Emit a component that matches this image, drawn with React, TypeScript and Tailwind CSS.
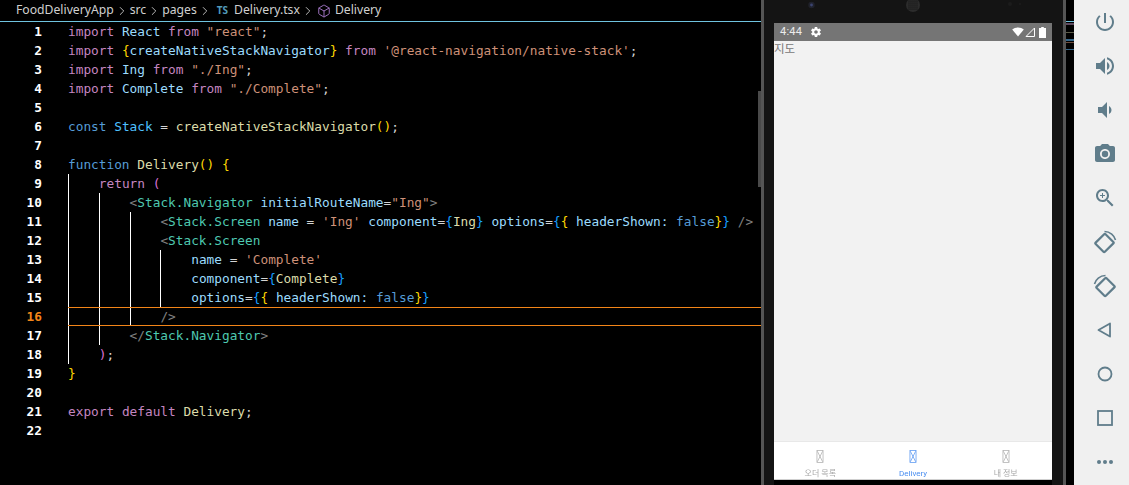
import { Box, ChevronRight } from 'lucide-react'
import type { ReactNode } from 'react'

// token colours from the editor theme
const KW = 'text-[#c586c0]'
const BL = 'text-[#569cd6]'
const VAR = 'text-[#9cdcfe]'
const CONST = 'text-[#4fc1ff]'
const FN = 'text-[#dcdcaa]'
const STR = 'text-[#ce9178]'
const TXT = 'text-[#d4d4d4]'
const TAG = 'text-[#808080]'
const COMP = 'text-[#4ec9b0]'
const Y = 'text-[#ffd700]'
const P = 'text-[#da70d6]'
const B = 'text-[#179fff]'

type Tok = [string, string]
type Line = { indent: number; toks: Tok[] }

const LINES: Line[] = [
  { indent: 0, toks: [['import', KW], [' ', TXT], ['React', VAR], [' ', TXT], ['from', KW], [' ', TXT], ['"react"', STR], [';', TXT]] },
  { indent: 0, toks: [['import', KW], [' ', TXT], ['{', Y], ['createNativeStackNavigator', VAR], ['}', Y], [' ', TXT], ['from', KW], [' ', TXT], ["'@react-navigation/native-stack'", STR], [';', TXT]] },
  { indent: 0, toks: [['import', KW], [' ', TXT], ['Ing', VAR], [' ', TXT], ['from', KW], [' ', TXT], ['"./Ing"', STR], [';', TXT]] },
  { indent: 0, toks: [['import', KW], [' ', TXT], ['Complete', VAR], [' ', TXT], ['from', KW], [' ', TXT], ['"./Complete"', STR], [';', TXT]] },
  { indent: 0, toks: [] },
  { indent: 0, toks: [['const', BL], [' ', TXT], ['Stack', CONST], [' = ', TXT], ['createNativeStackNavigator', FN], ['()', Y], [';', TXT]] },
  { indent: 0, toks: [] },
  { indent: 0, toks: [['function', BL], [' ', TXT], ['Delivery', FN], ['()', Y], [' ', TXT], ['{', Y]] },
  { indent: 1, toks: [['return', KW], [' ', TXT], ['(', P]] },
  { indent: 2, toks: [['<', TAG], ['Stack.Navigator', COMP], [' ', TXT], ['initialRouteName', VAR], ['=', TXT], ['"Ing"', STR], ['>', TAG]] },
  { indent: 3, toks: [['<', TAG], ['Stack.Screen', COMP], [' ', TXT], ['name', VAR], [' = ', TXT], ["'Ing'", STR], [' ', TXT], ['component', VAR], ['=', TXT], ['{', B], ['Ing', FN], ['}', B], [' ', TXT], ['options', VAR], ['=', TXT], ['{', B], ['{', Y], [' ', TXT], ['headerShown', VAR], [': ', VAR], ['false', BL], ['}', Y], ['}', B], [' ', TXT], ['/>', TAG]] },
  { indent: 3, toks: [['<', TAG], ['Stack.Screen', COMP]] },
  { indent: 4, toks: [['name', VAR], [' = ', TXT], ["'Complete'", STR]] },
  { indent: 4, toks: [['component', VAR], ['=', TXT], ['{', B], ['Complete', FN], ['}', B]] },
  { indent: 4, toks: [['options', VAR], ['=', TXT], ['{', B], ['{', Y], [' ', TXT], ['headerShown', VAR], [': ', VAR], ['false', BL], ['}', Y], ['}', B]] },
  { indent: 3, toks: [['/>', TAG]] },
  { indent: 2, toks: [['</', TAG], ['Stack.Navigator', COMP], ['>', TAG]] },
  { indent: 1, toks: [[')', P], [';', TXT]] },
  { indent: 0, toks: [['}', Y]] },
  { indent: 0, toks: [] },
  { indent: 0, toks: [['export', KW], [' ', TXT], ['default', KW], [' ', TXT], ['Delivery', FN], [';', TXT]] },
  { indent: 0, toks: [] },
]

function Crumb({ children }: { children: ReactNode }) {
  return (
    <>
      {children}
      <ChevronRight className="w-[14px] h-[14px] mx-[1px] text-[#d0d0d0]" strokeWidth={1.5} />
    </>
  )
}

function Breadcrumb() {
  return (
    <div className="h-[22px] flex items-center pl-[16px] border-b border-[#6fc3df] text-[12.2px] text-[#d0d0d0] font-['Noto_Sans',sans-serif] whitespace-nowrap">
      <Crumb>FoodDeliveryApp</Crumb>
      <Crumb>src</Crumb>
      <Crumb>pages</Crumb>
      <Crumb>
        <span className="text-[10px] font-bold text-[#519aba] mr-[6px] ml-[4px]">TS</span>
        Delivery.tsx
      </Crumb>
      <Box className="w-[14px] h-[14px] ml-[1px] mr-[4px] text-[#b180d7]" strokeWidth={1.5} />
      <span>Delivery</span>
    </div>
  )
}

function CodeRow({ line, n }: { line: Line; n: number }) {
  const active = n === 16
  return (
    <div className="flex h-[19px]">
      <div className={`w-[42px] shrink-0 text-right font-bold ${active ? 'text-[#f38518]' : 'text-white'}`}>{n}</div>
      <div className={`ml-[26px] flex-1 flex items-center ${active ? 'border-y border-[#f38518]' : ''}`}>
        {Array.from({ length: line.indent }).map((_, i) => (
          <span key={i} className="w-[30.8px] shrink-0 self-stretch border-l border-white" />
        ))}
        <span className="whitespace-pre">
          {line.toks.map(([t, c], i) => (
            <span key={i} className={c}>{t}</span>
          ))}
        </span>
      </div>
    </div>
  )
}

function Editor() {
  return (
    <div className="w-[761px] shrink-0 bg-black overflow-hidden">
      <Breadcrumb />
      <div className="font-['DejaVu_Sans_Mono',monospace] text-[12.79px] leading-[19px]">
        {LINES.map((line, i) => (
          <CodeRow key={i} line={line} n={i + 1} />
        ))}
      </div>
    </div>
  )
}

function TopBezel() {
  return (
    <svg className="w-full h-[23px] block shrink-0" viewBox="0 0 299 23">
      <circle cx="47.5" cy="5" r="3.2" fill="#20222c" />
      <circle cx="47.5" cy="5" r="1.4" fill="#3b4470" />
      <circle cx="149" cy="5" r="7" fill="#2c2c2c" />
      {[-4, -2, 0, 2, 4].map((dx) =>
        [-4, -2, 0, 2, 4].map((dy) => (
          <circle key={`${dx}${dy}`} cx={149 + dx} cy={5 + dy} r="0.6" fill="#0c0c0c" />
        )),
      )}
      <circle cx="246" cy="4" r="2" fill="#1c1c1c" />
      <circle cx="256" cy="4" r="1" fill="#1c1c1c" />
    </svg>
  )
}

function StatusBar() {
  return (
    <div className="h-[18px] shrink-0 bg-[#757575] flex items-center pl-[6px] pr-[6px] text-white">
      <span className="text-[11px] font-['Roboto',sans-serif] text-[#ececec] tracking-[0.2px]">4:44</span>
      <svg className="w-[12px] h-[12px] ml-[8px]" viewBox="0 0 24 24" fill="currentColor">
        <path d="M19.43 12.98c.04-.32.07-.64.07-.98s-.03-.66-.07-.98l2.11-1.65c.19-.15.24-.42.12-.64l-2-3.46c-.12-.22-.39-.3-.61-.22l-2.49 1c-.52-.4-1.08-.73-1.69-.98l-.38-2.65C14.46 2.18 14.25 2 14 2h-4c-.25 0-.46.18-.49.42l-.38 2.65c-.61.25-1.17.59-1.69.98l-2.49-1c-.23-.09-.49 0-.61.22l-2 3.46c-.13.22-.07.49.12.64l2.11 1.65c-.04.32-.07.65-.07.98s.03.66.07.98l-2.11 1.65c-.19.15-.24.42-.12.64l2 3.46c.12.22.39.3.61.22l2.49-1c.52.4 1.08.73 1.69.98l.38 2.65c.03.24.24.42.49.42h4c.25 0 .46-.18.49-.42l.38-2.65c.61-.25 1.17-.59 1.69-.98l2.49 1c.23.09.49 0 .61-.22l2-3.46c.12-.22.07-.49-.12-.64l-2.11-1.65zM12 15.5c-1.93 0-3.5-1.57-3.5-3.5s1.57-3.5 3.5-3.5 3.5 1.57 3.5 3.5-1.57 3.5-3.5 3.5z" />
      </svg>
      <svg className="w-[12px] h-[10px] ml-auto" viewBox="0 0 12 10" fill="currentColor">
        <path d="M6 9.5 0.2 2.6C1.7 1.3 3.7.5 6 .5s4.3.8 5.8 2.1z" />
      </svg>
      <svg className="w-[10px] h-[10px] ml-[1px]" viewBox="0 0 10 10" fill="none" stroke="currentColor">
        <path d="M1 9.5 9.5 1v8.5z" />
      </svg>
      <svg className="w-[7px] h-[11px] ml-[4px]" viewBox="0 0 7 11" fill="currentColor">
        <path d="M2.2 0h2.6v1H7v10H0V1h2.2z" />
      </svg>
    </div>
  )
}

function Tab({ label, active }: { label: string; active?: boolean }) {
  return (
    <div className={`flex-1 flex flex-col items-center pt-[8px] ${active ? 'text-[#4a8ef0]' : 'text-[#a8a8a8]'}`}>
      <svg className="w-[8px] h-[15px]" viewBox="0 0 8 15" fill="none" stroke="currentColor" strokeWidth="0.8">
        <rect x="0.5" y="0.5" width="7" height="14" />
        <path d="M1 1.5 7 13.5M7 1.5 1 13.5" />
      </svg>
      <span className="text-[8px] leading-[10px] mt-[6px] blur-[0.4px] font-['Roboto','Noto_Sans_CJK_KR',sans-serif]">{label}</span>
    </div>
  )
}

function Phone() {
  return (
    <div className="relative w-[305px] shrink-0 flex flex-col border-x-[3px] border-[#555] bg-[#141414]">
      {/* side button */}
      <div className="absolute left-[-6px] top-[91px] w-[3px] h-[96px] bg-[#4a4a4a]" />
      <TopBezel />
      <div className="ml-[10px] mr-[11px] flex-1 flex flex-col">
        <StatusBar />
        <div className="h-[400px] bg-[#f2f2f2] text-[11.5px] leading-[14px] text-[#777] font-['Noto_Sans_CJK_KR',sans-serif]">지도</div>
        <div className="h-[39px] flex bg-white border-t border-[#e8e8e8] border-b-[#cfcfcf] border-b">
          <Tab label="오더 목록" />
          <Tab label="Delivery" active />
          <Tab label="내 정보" />
        </div>
        <div className="flex-1 bg-black" />
      </div>
    </div>
  )
}

// little slice of the minimap that shows between the phone and the toolbar
function MinimapSliver() {
  return (
    <div className="w-[8px] shrink-0 bg-black flex flex-col items-stretch pt-[21px]">
      <div className="h-[1px] bg-[#6fc3df]" />
      <div className="h-[2px] mt-[1px] bg-[#5f4a5f]" />
      <div className="h-[1px] mt-[7px] bg-[#5c5c4a]" />
      <div className="h-[2px] mt-[6px] bg-[#35688c]" />
      <div className="h-[1px] mt-[1px] bg-[#6e4e3e]" />
      <div className="h-[1px] mt-[6px] bg-[#35688c]" />
    </div>
  )
}

function ToolIcon({ children }: { children: ReactNode }) {
  return (
    <div className="h-[44px] flex items-center justify-center">
      <svg className="w-6 h-6" viewBox="0 0 24 24" fill="#607d8b">
        {children}
      </svg>
    </div>
  )
}

function Toolbar() {
  return (
    <div className="flex-1 bg-[#f0f0f0] flex flex-col items-center pl-[7px]">
      <ToolIcon>
        <path d="M13 3h-2v10h2V3zm4.83 2.17l-1.42 1.42C17.99 7.86 19 9.81 19 12c0 3.87-3.13 7-7 7s-7-3.13-7-7c0-2.19 1.01-4.14 2.58-5.42L6.17 5.17C4.23 6.82 3 9.26 3 12c0 4.97 4.03 9 9 9s9-4.03 9-9c0-2.74-1.23-5.18-3.17-6.83z" />
      </ToolIcon>
      <ToolIcon>
        <path d="M3 9v6h4l5 5V4L7 9H3zm13.5 3c0-1.77-1.02-3.29-2.5-4.03v8.05c1.48-.73 2.5-2.25 2.5-4.02zM14 3.23v2.06c2.89.86 5 3.54 5 6.71s-2.11 5.85-5 6.71v2.06c4.01-.91 7-4.49 7-8.77s-2.99-7.86-7-8.77z" />
      </ToolIcon>
      <ToolIcon>
        <path d="M18.5 12c0-1.77-1.02-3.29-2.5-4.03v8.05c1.48-.73 2.5-2.25 2.5-4.02zM5 9v6h4l5 5V4L9 9H5z" />
      </ToolIcon>
      <ToolIcon>
        <circle cx="12" cy="12" r="3.2" />
        <path d="M9 2L7.17 4H4c-1.1 0-2 .9-2 2v12c0 1.1.9 2 2 2h16c1.1 0 2-.9 2-2V6c0-1.1-.9-2-2-2h-3.17L15 2H9zm3 15c-2.76 0-5-2.24-5-5s2.24-5 5-5 5 2.24 5 5-2.24 5-5 5z" />
      </ToolIcon>
      <ToolIcon>
        <path d="M15.5 14h-.79l-.28-.27C15.41 12.59 16 11.11 16 9.5 16 5.91 13.09 3 9.5 3S3 5.91 3 9.5 5.91 16 9.5 16c1.61 0 3.09-.59 4.23-1.57l.27.28v.79l5 4.99L20.49 19l-4.99-5zm-6 0C7.01 14 5 11.99 5 9.5S7.01 5 9.5 5 14 7.01 14 9.5 11.99 14 9.5 14z" />
        <path d="M12 10h-2v2H9v-2H7V9h2V7h1v2h2v1z" />
      </ToolIcon>
      <ToolIcon>
        <g fill="none" stroke="#607d8b" strokeWidth="2.2" strokeLinejoin="round" transform="matrix(-1 0 0 1 24 0)">
          <rect x="6" y="6" width="13" height="14" rx="1" transform="rotate(-45 12.5 13)" />
          <path d="M1.5 10C2.5 5.5 7 1.5 12.5 1.5" strokeWidth="1.6" />
        </g>
      </ToolIcon>
      <ToolIcon>
        <g fill="none" stroke="#607d8b" strokeWidth="2.2" strokeLinejoin="round">
          <rect x="6" y="6" width="13" height="14" rx="1" transform="rotate(45 12.5 13)" />
          <path d="M1.5 10C2.5 5.5 7 1.5 12.5 1.5" strokeWidth="1.6" />
        </g>
      </ToolIcon>
      <ToolIcon>
        <path d="M17 5.5 5.5 12 17 18.5z" fill="none" stroke="#607d8b" strokeWidth="1.8" strokeLinejoin="round" />
      </ToolIcon>
      <ToolIcon>
        <circle cx="12" cy="12" r="6.5" fill="none" stroke="#607d8b" strokeWidth="1.8" />
      </ToolIcon>
      <ToolIcon>
        <rect x="5" y="5" width="14" height="14" fill="none" stroke="#607d8b" strokeWidth="1.8" />
      </ToolIcon>
      <ToolIcon>
        <circle cx="6" cy="12" r="2" />
        <circle cx="12" cy="12" r="2" />
        <circle cx="18" cy="12" r="2" />
      </ToolIcon>
    </div>
  )
}

export default function App() {
  return (
    <div className="w-[1129px] h-[485px] flex overflow-hidden bg-black">
      <Editor />
      <Phone />
      <MinimapSliver />
      <Toolbar />
    </div>
  )
}
